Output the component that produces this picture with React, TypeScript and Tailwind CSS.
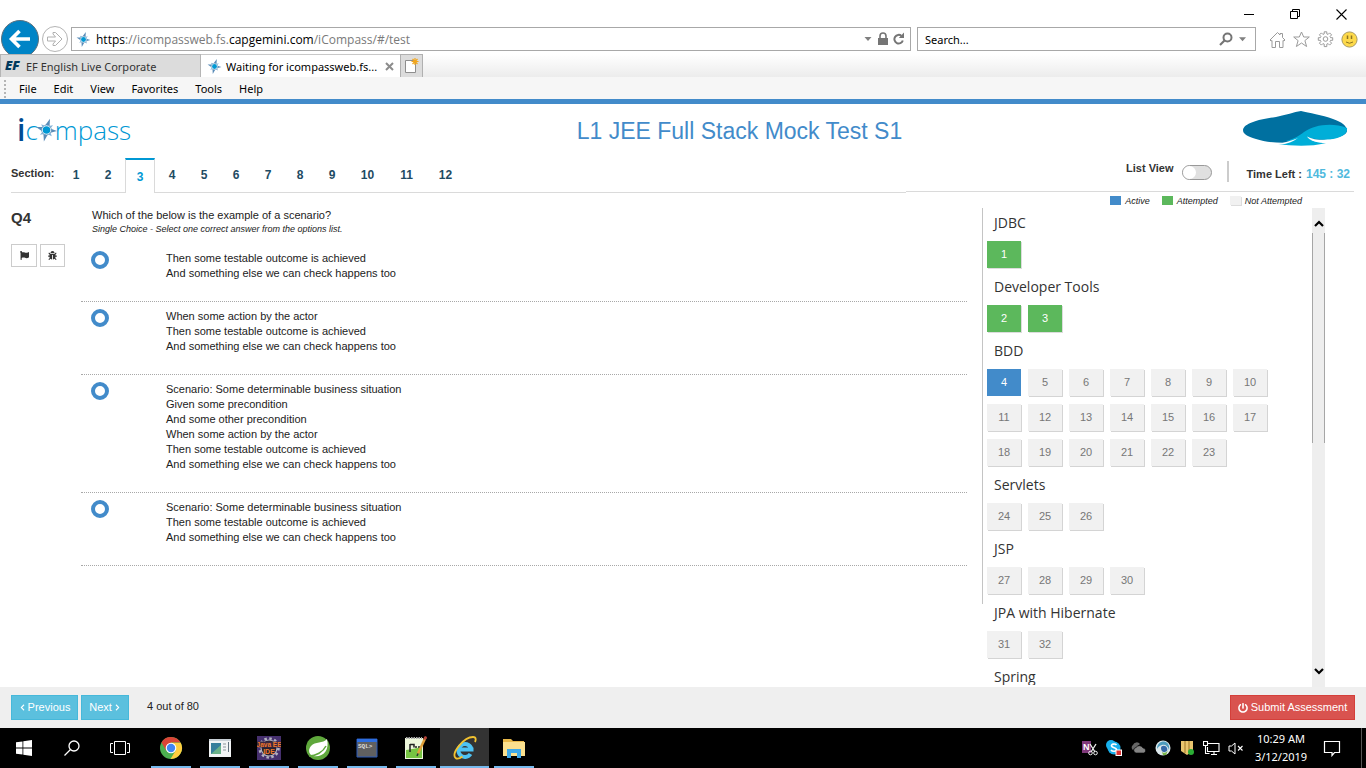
import React from "react";
import { FaBug, FaFlag, FaPowerOff, FaChevronLeft, FaChevronRight } from "react-icons/fa";

type Status = "active" | "attempted" | "open";

const sections = [1, 2, 3, 4, 5, 6, 7, 8, 9, 10, 11, 12];

const options: string[][] = [
  ["Then some testable outcome is achieved", "And something else we can check happens too"],
  ["When some action by the actor", "Then some testable outcome is achieved", "And something else we can check happens too"],
  [
    "Scenario: Some determinable business situation",
    "Given some precondition",
    "And some other precondition",
    "When some action by the actor",
    "Then some testable outcome is achieved",
    "And something else we can check happens too",
  ],
  ["Scenario: Some determinable business situation", "Then some testable outcome is achieved", "And something else we can check happens too"],
];

const groups = [
  { name: "JDBC", first: 1, count: 1 },
  { name: "Developer Tools", first: 2, count: 2 },
  { name: "BDD", first: 4, count: 20 },
  { name: "Servlets", first: 24, count: 3 },
  { name: "JSP", first: 27, count: 4 },
  { name: "JPA with Hibernate", first: 31, count: 2 },
  { name: "Spring", first: 33, count: 0 },
];

const CURRENT = 4;

const statusOf = (n: number): Status => (n === CURRENT ? "active" : n < CURRENT ? "attempted" : "open");

const statusStyle: Record<Status, string> = {
  active: "bg-[#428bca] text-white",
  attempted: "bg-[#5cb85c] text-white shadow-[1px_1px_0_0_#dcdcdc]",
  open: "bg-[#f1f1f1] text-[#777] shadow-[1px_1px_0_0_#d4d4d4]",
};

function CompassIcon({ className }: { className: string }) {
  return (
    <svg viewBox="0 0 24 26" className={className} aria-hidden="true">
      <path d="M16 0 15.500 8.500 12 12 10.500 7.500ZM24 14 16.500 16 12 13 17 11.500ZM9 26 8.500 17.500 12 13 13.500 18ZM0 9.500 7.500 9.500 12 13 7 14.500Z" fill="#5a8cb8" />
      <path d="M6 6.500 10 8 7.500 10.500ZM19.500 7.500 16.500 11 14.500 8.500ZM18 20 14 18 16.500 15.500ZM4.500 18.500 7.500 15 9.500 17.500Z" fill="#7fb2d8" />
      <circle cx="12" cy="13" r="5.600" fill="#fff" stroke="#5a8cb8" strokeWidth=".8" />
      <circle cx="12" cy="13" r="4.300" fill="#0098d4" />
    </svg>
  );
}

function WindowControls() {
  return (
    <div className="flex h-5 shrink-0 items-end justify-end gap-[35px] pr-[19px]">
      <button aria-label="Minimize" className="h-3 w-[11px]">
        <svg viewBox="0 0 11 12" className="h-3 w-[11px]"><path d="M0 6.500h10" stroke="#000" /></svg>
      </button>
      <button aria-label="Restore" className="h-3 w-[11px]">
        <svg viewBox="0 0 11 12" className="h-3 w-[11px]"><path d="M.5 3.500h7v7h-7zM2.500 3.500v-2h7v7h-2" fill="none" stroke="#000" /></svg>
      </button>
      <button aria-label="Close" className="h-3 w-[11px]">
        <svg viewBox="0 0 11 12" className="h-3 w-[11px]"><path d="M.5 1.500l10 10M10.500 1.500l-10 10" stroke="#000" strokeWidth="1.100" /></svg>
      </button>
    </div>
  );
}

function AddressRow() {
  return (
    <div className="h-[34px] shrink-0 overflow-hidden">
      <div className="flex h-[38px] items-center pr-2 pl-[1px]">
        <button aria-label="Back" className="flex size-[38px] shrink-0 items-center justify-center rounded-full border border-[#5a6f7c] bg-[#0084c6]">
          <svg viewBox="0 0 24 24" className="size-6"><path d="M22 12H4M11.500 4 3.500 12l8 8" fill="none" stroke="#fff" strokeWidth="3.600" /></svg>
        </button>
        <button aria-label="Forward" className="ml-[3px] flex size-[26px] shrink-0 items-center justify-center rounded-full border border-[#b4b4b4]">
          <svg viewBox="0 0 18 18" className="size-[18px]"><path d="M1.500 7h8L7 4V2.500h2.500L16 9l-6.500 6.500H7V14l2.500-3h-8z" fill="none" stroke="#b0b0b0" /></svg>
        </button>
        <div className="ml-[3px] flex h-6 min-w-0 flex-1 items-center border border-[#a8a8a8] pr-[5px] pl-1">
          <CompassIcon className="size-[15px] shrink-0" />
          <div className="ml-[5px] min-w-0 flex-1 truncate pt-0.5 font-['Open_Sans',sans-serif] text-[12px] leading-5 text-[#7a7a7a]">
            <span className="text-black">https</span>://icompassweb.fs.<span className="text-black">capgemini.com</span>/iCompass/#/test
          </div>
          <svg viewBox="0 0 8 5" className="mr-[5px] h-[5px] w-2"><path d="M.5 0h7L4 4z" fill="#808080" /></svg>
          <svg viewBox="0 0 12 14" className="mr-1 h-[14px] w-3"><path d="M3 7V4a3 3 0 0 1 6 0v3" fill="none" stroke="#757575" strokeWidth="1.600" /><path d="M1 6h10v7H1z" fill="#757575" /></svg>
          <svg viewBox="0 0 12 14" className="h-[14px] w-3"><path d="M9.800 8.500a4.300 4.300 0 1 1-1.300-4.600" fill="none" stroke="#757575" strokeWidth="2" /><path d="M11 .500v5.500H5.800z" fill="#757575" /></svg>
        </div>
        <div className="ml-1.5 flex h-6 w-[339px] shrink-0 items-center border border-[#a8a8a8] pr-[9px] pl-[7px]">
          <input aria-label="Search" placeholder="Search..." className="min-w-0 flex-1 pt-0.5 text-[11px] placeholder:text-black" />
          <svg viewBox="0 0 14 14" className="h-[14px] w-[14px]"><circle cx="8.500" cy="5.500" r="4" fill="none" stroke="#757575" strokeWidth="2" /><path d="M5.500 8.500 1 13" stroke="#757575" strokeWidth="2.200" /></svg>
          <svg viewBox="0 0 8 5" className="ml-1.5 h-[5px] w-[7px]"><path d="M0 0h8L4 4.500z" fill="#808080" /></svg>
        </div>
        <div className="ml-[13px] flex items-center gap-[7px]">
          <button aria-label="Home"><svg viewBox="0 0 17 17" className="block size-[17px]"><path d="M1 9 8.500 1.500 11 4V2.500h2.500v4L16 9l-1 1-1-.5v7h-3.500v-6h-4v6H3v-7L2 10z" fill="none" stroke="#9a9a9a" /></svg></button>
          <button aria-label="Favorites"><svg viewBox="0 0 17 17" className="block size-[17px]"><path d="M8.500 1l2.200 5h5.600l-4.400 3.600 1.700 5.900-5.100-3.500-5.100 3.500 1.700-5.900L.700 6h5.600z" fill="none" stroke="#9a9a9a" /></svg></button>
          <button aria-label="Settings">
            <svg viewBox="0 0 17 17" className="block size-[17px]">
              <path d="M7.200.8h2.600v2.100l1.300.5 1.500-1.500 2 2-1.500 1.500.5 1.300h2.100v2.600h-2.100l-.5 1.300 1.500 1.500-2 2-1.500-1.500-1.300.5v2.500H7.200v-2.500l-1.300-.5-1.500 1.500-2-2 1.500-1.500-.5-1.300H1.300V6.700h2.100l.5-1.300-1.500-1.500 2-2 1.500 1.500 1.300-.5z" fill="none" stroke="#9a9a9a" strokeLinejoin="round" />
              <circle cx="8.500" cy="8" r="2.300" fill="none" stroke="#9a9a9a" />
            </svg>
          </button>
          <button aria-label="Feedback"><svg viewBox="0 0 17 17" className="block size-[17px]"><circle cx="8.500" cy="8.500" r="7.600" fill="#fdd94a" stroke="#a89a62" /><path d="M6.500 4.500v3.500M10.500 4.500v3.500" stroke="#8c7422" strokeWidth="1.500" /><path d="M5 11q3.500 2.500 7 0" fill="none" stroke="#8c7422" /></svg></button>
        </div>
      </div>
    </div>
  );
}

function BrowserTabs() {
  return (
    <div className="flex h-[23px] shrink-0 bg-gradient-to-b from-white to-[#ececec] text-[11px] whitespace-nowrap text-[#333]">
      <div className="flex w-[201px] items-center border border-b-0 border-[#b5b5b5] bg-[#dcdcdc] pl-1">
        <span className="w-[21px] font-['Open_Sans',sans-serif] text-[13px] font-extrabold text-[#00395d] italic">EF</span>
        <span className="pt-0.5">EF English Live Corporate</span>
      </div>
      <div className="flex w-[199px] items-center border-t border-[#c8c8c8] bg-white pr-1.5 pl-1.5">
        <CompassIcon className="size-[15px] shrink-0" />
        <span className="ml-1 min-w-0 flex-1 pt-0.5 text-black">Waiting for icompassweb.fs...</span>
        <button aria-label="Close tab"><svg viewBox="0 0 9 9" className="block size-[9px]"><path d="M1 1l7 7M8 1 1 8" stroke="#8c8c8c" strokeWidth="2" /></svg></button>
      </div>
      <button aria-label="New tab" className="flex w-[23px] items-center justify-center border border-b-0 border-[#b0b0b0] bg-[#dcdcdc]">
        <svg viewBox="0 0 15 16" className="h-4 w-[15px]"><path d="M1.500 2.500h10v12h-10z" fill="#fff" stroke="#8e8e8e" /><path d="M11 0v7M7.500 3.500h7M8.500 1l5 5M13.500 1l-5 5" stroke="#f2a61c" strokeWidth="1.200" /></svg>
      </button>
    </div>
  );
}

function MenuBar() {
  return (
    <nav className="flex h-[22px] shrink-0 items-center gap-[17px] bg-[#f6f6f6] pt-0.5 text-[11px] text-black">
      <span className="ml-1 -mr-1 h-[18px] border-l-2 border-dotted border-[#b5b5b5]" />
      {["File", "Edit", "View", "Favorites", "Tools", "Help"].map((m) => (
        <button key={m}>{m}</button>
      ))}
    </nav>
  );
}

function Header() {
  return (
    <header className="grid h-[59px] shrink-0 grid-cols-[1fr_auto_1fr] items-start border-t-[5px] border-[#428bca] pt-1.5 pr-[18px] pl-[17px]">
      <div className="flex h-10 items-center font-['Open_Sans',sans-serif] text-[26px] leading-8 font-light text-[#0098d4]">
        <span className="text-[30px] font-semibold text-[#004b93]">i</span>
        <span>c</span>
        <CompassIcon className="-mx-0.5 h-[26px] w-[21px]" />
        <span>mpass</span>
      </div>
      <h1 className="pl-[114px] text-[23px] leading-[42px] text-[#428bca]">L1 JEE Full Stack Mock Test S1</h1>
      <svg viewBox="0 0 106 36" className="h-9 w-[106px] justify-self-end" aria-label="Capgemini">
        <path d="M1 20C2 13 18 9 34 7 44 5 52 2 59 1 67 3 80 5 91 9 100 12 105 16 105 21 104 28 82 30 62 31 44 34 26 33 14 29 5 26 1 24 1 20Z" fill="#0070a0" />
        <path d="M44 31C52 29 57 26 62 22 72 15 90 12 105 18 106 25 96 30 82 29.500 74 29.500 69 28.500 66 27 69 31 76 33 84 33 68 37 50 36 36 34 40 34 46 33 50 31Z" fill="#00aed8" />
        <path d="M26 35C38 34 50 31 56 28 52 31 46 34 38 34.500ZM65 26.500C72 30.500 84 30.500 94 29 86 32 77 33 71 31 68 30 66 28 65 26.500Z" fill="#fff" />
      </svg>
    </header>
  );
}

function SectionBar() {
  return (
    <div className="flex h-[35px] shrink-0 items-start pr-3 pl-[11px]">
      <div className="flex h-[35px] w-2/3 border-b border-[#dadada]">
        <span className="w-[50px] pt-[7px] text-[11px] leading-4 font-bold text-[#333]">Section:</span>
        <div className="-mb-px flex gap-0.5">
          {sections.map((n) => (
            <button
              key={n}
              className={
                n === 3
                  ? "w-[30px] border-x border-t-2 border-x-[#dadada] border-t-[#0098d4] bg-white text-[12px] font-bold text-[#0098d4]"
                  : n > 9
                    ? "mb-px w-[37px] text-[12px] font-bold text-[#1e4b63]"
                    : "mb-px w-[30px] text-[12px] font-bold text-[#1e4b63]"
              }
            >
              {n}
            </button>
          ))}
        </div>
      </div>
      <div className="flex h-[34px] flex-1 items-start justify-end border-b border-[#dadada] text-[11px] font-bold text-[#333]">
        <label htmlFor="list-view" className="pt-0.5 leading-4">List View</label>
        <input
          id="list-view"
          type="checkbox"
          role="switch"
          className="mt-[7px] ml-2 h-[15px] w-[30px] appearance-none rounded-full border border-[#999] bg-[#e0e0e0] before:block before:size-[13px] before:rounded-full before:bg-white checked:before:ml-[15px]"
        />
        <span className="mt-[3px] ml-[15px] h-[21px] w-0.5 bg-[#ccc]" />
        <span className="ml-[18px] pt-2 leading-4">Time Left :</span>
        <span className="ml-1 pt-2 pr-1 text-[12px] leading-4 text-[#4fb9dd]">145 : 32</span>
      </div>
    </div>
  );
}

function Question() {
  return (
    <section className="flex min-w-0 flex-1 items-start pt-[15px] pl-[11px]">
      <div className="w-[70px] shrink-0">
        <h2 className="text-[15px] leading-5 font-bold text-[#333]">Q4</h2>
        <div className="mt-4 flex gap-[3px] text-[#333]">
          <button aria-label="Flag question" className="flex h-[23px] w-[26px] items-center justify-center border border-[#ccc]"><FaFlag size={9} /></button>
          <button aria-label="Report a problem" className="flex h-[23px] w-[25px] items-center justify-center border border-[#ccc]"><FaBug size={9} /></button>
        </div>
      </div>
      <fieldset className="min-w-0 flex-1 text-[11px] leading-[15px] text-[#222]">
        <legend className="block px-[11px]">
          <span className="block">Which of the below is the example of a scenario?</span>
          <span className="block text-[9px] leading-3 italic">Single Choice - Select one correct answer from the options list.</span>
        </legend>
        <div className="pt-[9px]">
          {options.map((lines, i) => (
            <div key={i} className="flex items-start border-b border-dotted border-[#a8a8a8] pt-[7px] pb-5 pl-[10px]">
              <input
                id={`option-${i}`}
                type="radio"
                name="answer"
                className="size-[18px] shrink-0 appearance-none rounded-full border-4 border-[#428bca] bg-white checked:bg-[#428bca]"
              />
              <label htmlFor={`option-${i}`} className="ml-[57px]">
                {lines.map((l, j) => (
                  <span key={j} className="block">{l}</span>
                ))}
              </label>
            </div>
          ))}
        </div>
      </fieldset>
    </section>
  );
}

function Legend() {
  return (
    <div className="flex h-[15px] shrink-0 items-center justify-end gap-3 pr-16 text-[9px] leading-3 text-[#222] italic">
      <span className="flex items-center gap-1"><i className="h-[9px] w-[11px] bg-[#428bca]" />Active</span>
      <span className="flex items-center gap-1"><i className="h-[9px] w-[11px] bg-[#5cb85c]" />Attempted</span>
      <span className="flex items-center gap-1"><i className="h-[9px] w-[11px] bg-[#f1f1f1] shadow-[1px_1px_0_#dcdcdc]" />Not Attempted</span>
    </div>
  );
}

function Palette() {
  return (
    <aside className="flex w-[384px] shrink-0 flex-col">
      <Legend />
      <div className="flex min-h-0 flex-1 pr-[41px]">
        <div className="h-[396px] w-px shrink-0 bg-[#c4c4c4]" />
        <div className="mb-0.5 min-w-0 flex-1 overflow-hidden pl-1">
          {groups.map((g) => (
            <div key={g.name} className="pb-1">
              <h3 className="flex h-[33px] items-center pb-[3px] pl-[7px] font-['Open_Sans',sans-serif] text-[14px] leading-5 text-[#333]">{g.name}</h3>
              <div className="flex flex-wrap gap-x-[7px] gap-y-2 pr-6">
                {Array.from({ length: g.count }, (_, i) => g.first + i).map((n) => (
                  <button key={n} className={`h-[27px] w-[34px] text-[11px] font-medium ${statusStyle[statusOf(n)]}`}>{n}</button>
                ))}
              </div>
            </div>
          ))}
        </div>
        <div className="flex w-[13px] shrink-0 flex-col bg-[#eee]">
          <button aria-label="Scroll up" className="flex h-[25px] items-center justify-center pt-1.5"><svg viewBox="0 0 10 7" className="h-[7px] w-[10px]"><path d="M1 6l4-4 4 4" fill="none" stroke="#000" strokeWidth="2.200" /></svg></button>
          <div className="h-[210px] border-x border-[#a6a6a6]" />
          <span className="flex-1" />
          <button aria-label="Scroll down" className="flex h-[25px] items-center justify-center pb-1.5"><svg viewBox="0 0 10 7" className="h-[7px] w-[10px]"><path d="M1 1l4 4 4-4" fill="none" stroke="#000" strokeWidth="2.200" /></svg></button>
        </div>
      </div>
    </aside>
  );
}

function Footer() {
  return (
    <footer className="flex h-[41px] shrink-0 items-center bg-[#efefef] px-[11px] text-[11px]">
      <button className="flex h-[25px] w-[67px] items-center justify-center gap-0.5 border border-[#46b8da] bg-[#5bc0de] text-white"><FaChevronLeft size={7} />Previous</button>
      <button className="ml-[3px] flex h-[25px] w-12 items-center justify-center gap-0.5 border border-[#46b8da] bg-[#5bc0de] text-white">Next<FaChevronRight size={7} /></button>
      <span className="ml-[18px] flex-1 pb-0.5 text-[#222]">4 out of 80</span>
      <button className="flex h-[25px] w-[125px] items-center justify-center gap-[3px] border border-[#d43f3a] bg-[#d9534f] text-white"><FaPowerOff size={10} />Submit Assessment</button>
    </footer>
  );
}

const taskApps: { name: string; active?: boolean; icon: React.ReactNode }[] = [
  {
    name: "Chrome",
    icon: (
      <svg viewBox="0 0 24 24" className="size-6">
        <circle cx="12" cy="12" r="11" fill="#4caf50" />
        <path d="M12 12 2.500 6.400A11 11 0 0 1 21.600 6.600L12 6.600Z" fill="#db4437" />
        <path d="M2.500 6.400 7.300 14.700 12 12 12 5z" fill="#db4437" />
        <path d="M12 6.800h9.700A11 11 0 0 1 11.500 23l5.200-8.600z" fill="#ffcd40" />
        <circle cx="12" cy="12" r="5.300" fill="#fff" /><circle cx="12" cy="12" r="4.200" fill="#4285f4" />
      </svg>
    ),
  },
  {
    name: "Application",
    icon: (
      <svg viewBox="0 0 24 24" className="size-6">
        <path d="M1 3h22v18H1z" fill="#f2f4f5" /><path d="M1 3h22v2H1z" fill="#c8d0d6" />
        <path d="M3 7h10v11H3z" fill="#377f9c" /><path d="M3 18 13 9v9z" fill="#6bb28a" />
        <path d="M15 8h3M15 11h3M15 14h3" stroke="#8b949b" /><path d="M20.500 6v10" stroke="#60707c" />
      </svg>
    ),
  },
  {
    name: "Eclipse",
    icon: (
      <svg viewBox="0 0 24 24" className="size-6">
        <path d="M0 0h24v24H0z" fill="#46306e" />
        <circle cx="12" cy="12" r="9.500" fill="none" stroke="#b4b4c0" strokeWidth="2.500" strokeDasharray="2.500 2.474" />
        <circle cx="12" cy="12" r="8" fill="#26202e" stroke="#b4b4c0" strokeWidth="1.200" />
        <path d="M0 5.500h24v6H0z" fill="#3a2740" />
        <text x="12" y="11" textAnchor="middle" fontSize="6.500" fontWeight="700" fill="#f0782a" fontFamily="Liberation Sans">Java EE</text>
        <text x="12" y="17.500" textAnchor="middle" fontSize="7" fontWeight="700" fill="#f0782a" fontFamily="Liberation Sans">IDE</text>
      </svg>
    ),
  },
  {
    name: "Spring Tools",
    icon: (
      <svg viewBox="0 0 24 24" className="size-6">
        <circle cx="12" cy="12" r="12" fill="#5fa83c" />
        <path d="M21 3C17 8 9 5 5 10c-4 5-1 9 2 10 9 2 17-5 14-17Z" fill="#fff" />
        <path d="M3 20c7 0 14-4 17-10" fill="none" stroke="#5fa83c" strokeWidth="1.500" />
      </svg>
    ),
  },
  {
    name: "SQL",
    icon: (
      <svg viewBox="0 0 24 24" className="size-6">
        <path d="M2 3h20v18H2z" fill="#606060" stroke="#2858b8" /><path d="M2 3h20v3H2z" fill="#2e6ee0" />
        <text x="3" y="12" fontSize="6" fontWeight="700" fill="#ddd" fontFamily="Liberation Mono">SQL&gt;</text>
      </svg>
    ),
  },
  {
    name: "Notepad++",
    icon: (
      <svg viewBox="0 0 24 24" className="size-6">
        <path d="M1 2h18v21H1z" fill="#eef7dc" /><path d="M2 14c5-1 11-1 16-4v12H2z" fill="#76c442" /><path d="M2 2h16" stroke="#aaa" strokeWidth="2" strokeDasharray="1.500 1" />
        <path d="M6 8v8M6 8.500h4v3" fill="none" stroke="#222" strokeWidth="1.500" /><path d="M11 11h2M14 11h2" stroke="#222" strokeWidth="1.500" />
        <path d="M21.500 1.500 14 17.500" stroke="#e0a03a" strokeWidth="2.500" /><path d="M22 .500 20.500 3.500" stroke="#b5413a" strokeWidth="2.500" /><path d="M14 17.500 13 20" stroke="#333" strokeWidth="1.500" />
      </svg>
    ),
  },
  {
    name: "Internet Explorer",
    active: true,
    icon: (
      <svg viewBox="0 0 24 24" className="size-6">
        <path d="M6 13.500h14.500M18.500 14A6.500 6.500 0 1 0 17.500 18" fill="none" stroke="#4ec3f3" strokeWidth="4" />
        <path d="M2.500 22C-2 17 11 1 20 1c4 0 2.500 4 2 5M2.500 22c2 1.500 5 0 7-1.500" fill="none" stroke="#f2c230" strokeWidth="1.800" />
      </svg>
    ),
  },
  {
    name: "File Explorer",
    icon: (
      <svg viewBox="0 0 24 24" className="size-6">
        <path d="M1 3h8l2 2h11v14H1z" fill="#e8b84a" /><path d="M1 6h22v14H1z" fill="#fbe08e" />
        <path d="M5 13h14v9h-4v-5H9v5H5z" fill="#3fa9e8" />
      </svg>
    ),
  },
];

function TrayIcons() {
  return (
    <div className="flex items-center gap-2">
      <svg viewBox="0 0 16 16" className="size-4"><path d="M0 1h9v12H0z" fill="#80397b" /><text x="1" y="10" fontSize="9" fontWeight="700" fill="#fff" fontFamily="Liberation Sans">N</text><path d="M8 4l5 8M14 4l-5 8" stroke="#eee" strokeWidth="1.300" /><circle cx="8.500" cy="13" r="1.800" fill="none" stroke="#eee" /><circle cx="13.500" cy="13" r="1.800" fill="none" stroke="#eee" /></svg>
      <svg viewBox="0 0 16 16" className="size-4"><circle cx="5" cy="5" r="5" fill="#18b0ec" /><circle cx="8" cy="8" r="6.500" fill="#18b0ec" /><path d="M10.500 5C9 3.300 5 4 5.500 6s5 1.500 5 3.500-4 2.500-5.500.5" fill="none" stroke="#fff" strokeWidth="1.600" /><path d="M9.500 9.500H16V16H9.500z" fill="#fff" /><path d="M10.500 10.500H15V15h-4.500z" fill="#d33" /></svg>
      <svg viewBox="0 0 17 16" className="h-4 w-[17px]"><path d="M3 10a3 3 0 0 1 0-5 4 4 0 0 1 7-1" fill="#666" /><path d="M6 13a2.800 2.800 0 0 1 0-5.500A4 4 0 0 1 13 8a2.600 2.600 0 0 1 1 5z" fill="#848484" stroke="#000" strokeWidth=".6" /></svg>
      <svg viewBox="0 0 16 16" className="size-4"><circle cx="8" cy="8" r="7.500" fill="#dce8ec" /><path d="M2 9C2 4 5 1.500 9 1.500 13 2 15 6 14 10 13 6 10 4 7 5 4 6 3 7 2 9Z" fill="#4d9bbd" /><path d="M6 8c0-3 5-3 6 0s-1 4-3 4-3-2-3-4z" fill="#3569a8" /><path d="M7 12c3 2 5 0 6-2l-2 5H8z" fill="#79b648" /></svg>
      <svg viewBox="0 0 16 16" className="size-4"><path d="M2 1h12v10l-6 4-6-4z" fill="#eac56e" /><path d="M6 1v12M10 1v12" stroke="#9c7426" /><circle cx="12" cy="12" r="3" fill="#2bae35" /></svg>
      <svg viewBox="0 0 17 16" className="h-4 w-[17px]"><path d="M5 3.500h11v8H4.500V7M8 14.500h6M11 11.500v3M.500 1.500h4v4h-4zM2.500 5.500v8h4" fill="none" stroke="#fff" strokeWidth="1.100" /></svg>
      <svg viewBox="0 0 16 16" className="size-4"><path d="M1 6h2.500L7 3v11l-3.500-3H1z" fill="none" stroke="#fff" /><path d="M10 6l4.500 4.500M14.500 6 10 10.500" stroke="#fff" strokeWidth="1.100" /></svg>
    </div>
  );
}

function Taskbar() {
  return (
    <div className="flex h-10 shrink-0 items-stretch bg-black text-white">
      <button aria-label="Start" className="flex w-12 items-center justify-center"><svg viewBox="0 0 16 16" className="size-4"><path d="M0 2.300 6.500 1.400v6.200H0zM7.300 1.300 16 0v7.600H7.300zM0 8.400h6.500v6.200L0 13.700zM7.300 8.400H16V16l-8.700-1.300z" fill="#fff" /></svg></button>
      <button aria-label="Search" className="flex w-12 items-center justify-center"><svg viewBox="0 0 16 16" className="size-4"><circle cx="10" cy="6" r="5" fill="none" stroke="#fff" strokeWidth="1.300" /><path d="M6.500 9.500.500 15.500" stroke="#fff" strokeWidth="1.300" /></svg></button>
      <button aria-label="Task view" className="flex w-12 items-center justify-center"><svg viewBox="0 0 20 14" className="h-[14px] w-5"><path d="M4.500.500h11v13h-11zM3 2.500H.500v9H3M17 2.500h2.500v9H17" fill="none" stroke="#fff" /></svg></button>
      <div className="ml-0.5 flex flex-1 items-stretch">
        {taskApps.map((a) => (
          <button key={a.name} aria-label={a.name} className={a.active ? "flex w-[49px] flex-col items-center bg-[#333]" : "flex w-[49px] flex-col items-center"}>
            <span className="flex flex-1 items-center pt-0.5">{a.icon}</span>
            <span className={a.active ? "h-0.5 w-full bg-[#76b9ed]" : "h-0.5 w-10 bg-[#76b9ed]"} />
          </button>
        ))}
      </div>
      <TrayIcons />
      <div className="ml-[9px] flex w-[56px] flex-col justify-center text-center text-[11px] leading-[18px] whitespace-nowrap">
        <span>10:29 AM</span>
        <span>3/12/2019</span>
      </div>
      <button aria-label="Notifications" className="ml-[14px] flex items-center"><svg viewBox="0 0 18 17" className="h-[17px] w-[18px]"><path d="M1.500 1.500h15v11h-5l-2.500 3v-3H1.500z" fill="none" stroke="#fff" strokeWidth="1.200" /></svg></button>
      <span className="ml-5 w-[5px] border-l border-[#555]" />
    </div>
  );
}

export default function App() {
  return (
    <div className="flex h-screen min-h-[600px] flex-col overflow-hidden bg-white font-['Liberation_Sans',Arial,sans-serif]">
      <div className="flex shrink-0 flex-col font-['Noto_Sans',sans-serif]">
        <WindowControls />
        <AddressRow />
        <BrowserTabs />
        <MenuBar />
      </div>
      <Header />
      <SectionBar />
      <main className="flex min-h-0 flex-1">
        <Question />
        <div className="w-[15px] shrink-0" />
        <Palette />
      </main>
      <Footer />
      <div className="shrink-0 font-['Noto_Sans',sans-serif]">
        <Taskbar />
      </div>
    </div>
  );
}
